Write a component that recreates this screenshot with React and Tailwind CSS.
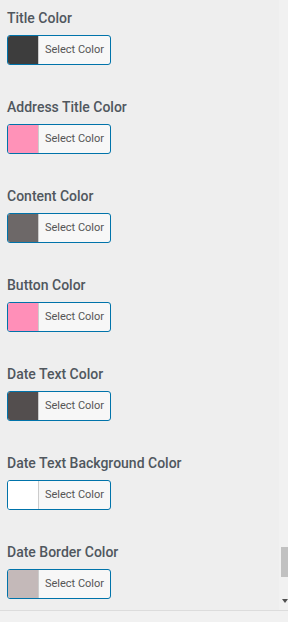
const fields = [
  { label: 'Title Color', color: '#3d3d3d' },
  { label: 'Address Title Color', color: '#ff92b8' },
  { label: 'Content Color', color: '#6d6868' },
  { label: 'Button Color', color: '#ff8fb8' },
  { label: 'Date Text Color', color: '#534e4e' },
  { label: 'Date Text Background Color', color: '#ffffff' },
  { label: 'Date Border Color', color: '#c4b9b9' },
];

const ColorField = ({ label, color }) => (
  <div className="h-[89px]">
    <div className="h-[35px] pt-[8px] text-[14px] leading-[20px] font-medium text-[#50575e]">{label}</div>
    <button className="flex h-[30px] w-[104px] items-stretch overflow-hidden rounded-[3px] border border-[#0073aa] bg-[#f7f7f7]">
      <span className="w-[31px] border-r border-[#ccc]" style={{ backgroundColor: color }} />
      <span className="flex-1 text-center text-[11px] leading-[28px] text-[#555]">Select Color</span>
    </button>
  </div>
);

export default function App() {
  return (
    <div className="flex h-[622px] w-[288px] flex-col bg-[#eeeeee] font-['Roboto',sans-serif]">
      <div className="flex flex-1 overflow-hidden">
        <div className="flex-1 pl-[7px]">
          {fields.map((f) => (
            <ColorField key={f.label} {...f} />
          ))}
        </div>
        {/* scrollbar */}
        <div className="relative w-[9px] bg-[#f1f1f1]">
          <div className="absolute left-[2px] top-[547px] h-[30px] w-[7px] bg-[#c1c1c1]" />
          <svg className="absolute left-[3px] top-[599px]" width="6" height="5" viewBox="0 0 6 5">
            <path d="M0 0h6L3 4z" fill="#505050" />
          </svg>
        </div>
      </div>
      <div className="h-[12px] border-t border-[#dcdcdc] bg-[#f1f1f1]" />
    </div>
  );
}
